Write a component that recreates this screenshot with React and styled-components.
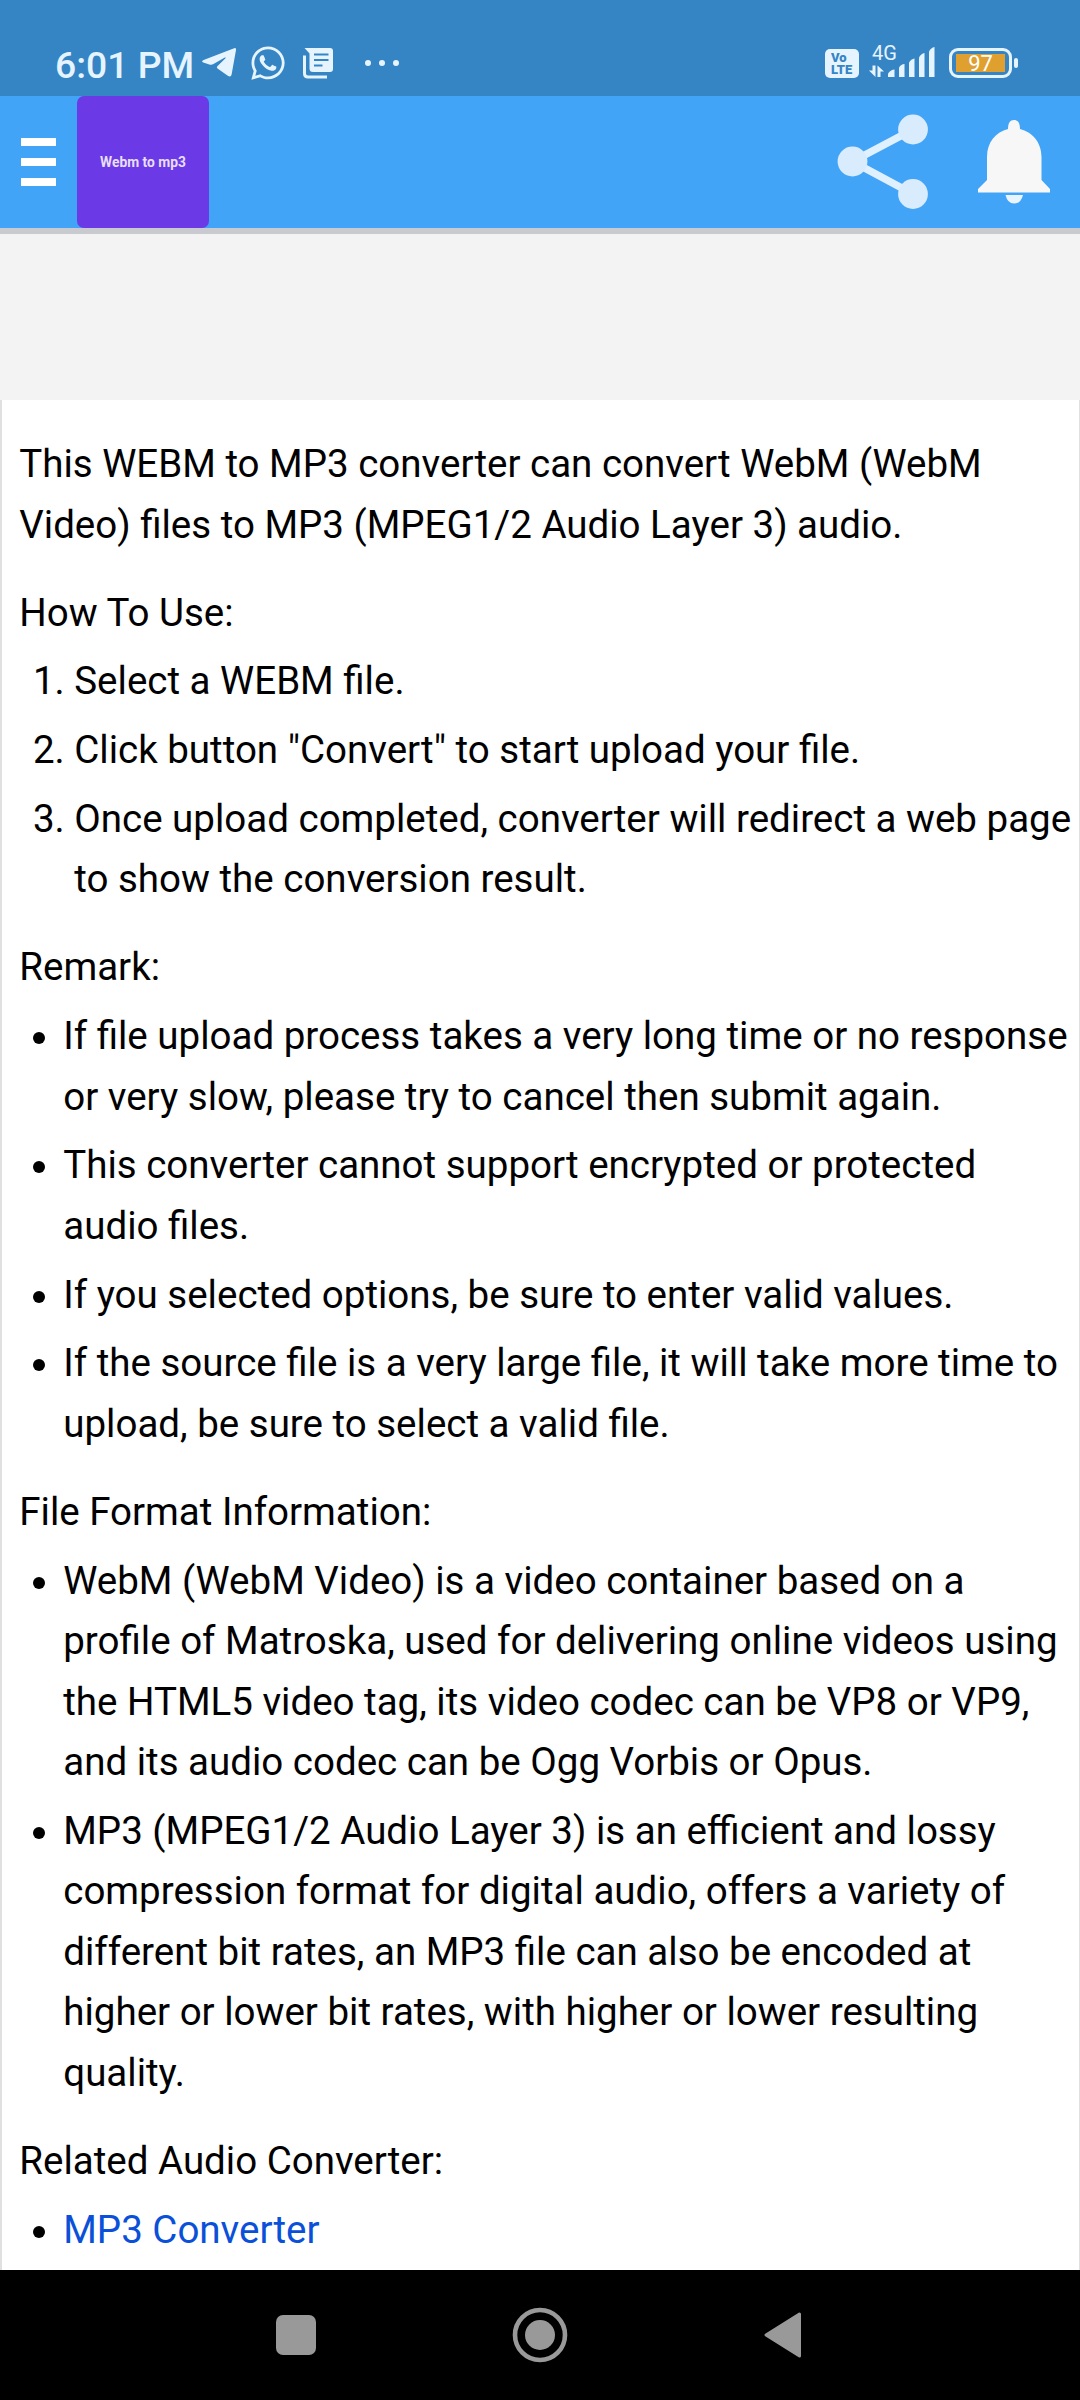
import React from "react";
import styled, { createGlobalStyle } from "styled-components";
import { FaWhatsapp } from "react-icons/fa";

const GlobalStyle = createGlobalStyle`
  * {
    box-sizing: border-box;
  }
  body {
    margin: 0;
    background-color: #000;
    font-family: Roboto, "Noto Sans", sans-serif;
  }
`;

function TelegramIcon() {
  return (
    <svg width="34" height="30" viewBox="0 0 34 30">
      <path
        d="M31.500.5Q34.300-.8 34 2L29.600 26.500Q28.900 29.800 25.800 27.800L15.500 20.500Q14.200 19.400 15.600 18L23.500 10.200Q24.200 9 22.800 9.600L11.500 16Q9.500 17.200 7.300 16.500L1.300 14.500Q-1.200 13.500 1.600 12Z"
        fill="#e6f4ff"
      />
    </svg>
  );
}

function NewsIcon() {
  return (
    <svg width="31" height="31" viewBox="0 0 31 31">
      <path
        d="M1.500 7.500V25.500Q1.500 29 5 29H24"
        fill="none"
        stroke="#e6f4ff"
        strokeWidth="3"
      />
      <path
        d="M1.500 0H27Q30 0 30 3V21Q30 24 27 24H10Q6.500 24 6.500 20.500V5.500Z"
        fill="#e6f4ff"
      />
      <path
        d="M11 6.500H25.500M11 12H25.500M11 17.500H19.500"
        stroke="#3585c5"
        strokeWidth="2.200"
      />
    </svg>
  );
}

function SignalIcon() {
  return (
    <svg width="67" height="32" viewBox="0 0 67 32">
      <g fill="#e6f4ff">
        <path d="M0 23.500H3.500V18.500H6.500V30ZM8.500 30V18.500L15 24.500H11.500V30Z" />
        <path d="M19 30V26.500Q22 22.500 25.500 22.500V30Z" />
        <path d="M30 30V20.500Q32 17 35.500 17V30Z" />
        <path d="M40 30V15.500Q42 12 45.500 11.500V30Z" />
        <path d="M50 30V10.500Q52 6.500 55.500 6V30Z" />
        <path d="M60 30V4.500Q62 .5 65.500 0V30Z" />
      </g>
    </svg>
  );
}

function ShareIcon() {
  return (
    <svg width="92" height="96" viewBox="0 0 92 96">
      <path
        d="M76 15.500L15.500 47.500L76 80"
        fill="none"
        stroke="#dff0fe"
        strokeWidth="7.500"
      />
      <circle cx="76" cy="15.500" r="14.900" fill="#d9ecfd" />
      <circle cx="15.500" cy="47.500" r="14.900" fill="#d9ecfd" />
      <circle cx="76" cy="80" r="14.900" fill="#d9ecfd" />
    </svg>
  );
}

function BellIcon() {
  return (
    <svg width="72" height="84" viewBox="0 0 72 84">
      <path
        d="M36 0C40 0 42 3 42 9C54 12 63.500 22 63.500 37V60L72 69V72.500H0V69L9 60V37C9 22 18 12 30 9C30 3 32 0 36 0Z"
        fill="#f7f7f7"
      />
      <path d="M27.500 75H45Q43 83.500 36 83.500Q29.500 83.500 27.500 75Z" fill="#e9f4fd" />
    </svg>
  );
}

function StatusBar() {
  return (
    <StyledStatusBar>
      <Time>6:01 PM</Time>
      <TelegramIcon />
      <WhatsAppIcon />
      <NewsIcon />
      <Dots>
        <i />
        <i />
        <i />
      </Dots>
      <Volte>
        <span>Vo</span>
        <span>LTE</span>
      </Volte>
      <Network>
        <SignalIcon />
        <span>4G</span>
      </Network>
      <Battery>
        <span>97</span>
      </Battery>
      <BatteryTip />
    </StyledStatusBar>
  );
}

function Header() {
  return (
    <StyledHeader>
      <MenuButton>
        <i />
        <i />
        <i />
      </MenuButton>
      <Logo>Webm to mp3</Logo>
      <HeaderIcons>
        <ShareIcon />
        <BellIcon />
      </HeaderIcons>
    </StyledHeader>
  );
}

const steps = [
  "Select a WEBM file.",
  'Click button "Convert" to start upload your file.',
  "Once upload completed, converter will redirect a web page to show the conversion result.",
];

const remarks = [
  "If file upload process takes a very long time or no response or very slow, please try to cancel then submit again.",
  "This converter cannot support encrypted or protected audio files.",
  "If you selected options, be sure to enter valid values.",
  "If the source file is a very large file, it will take more time to upload, be sure to select a valid file.",
];

const formats = [
  "WebM (WebM Video) is a video container based on a profile of Matroska, used for delivering online videos using the HTML5 video tag, its video codec can be VP8 or VP9, and its audio codec can be Ogg Vorbis or Opus.",
  "MP3 (MPEG1/2 Audio Layer 3) is an efficient and lossy compression format for digital audio, offers a variety of different bit rates, an MP3 file can also be encoded at higher or lower bit rates, with higher or lower resulting quality.",
];

function BulletList({ items }) {
  return (
    <List>
      {items.map((item) => (
        <Item key={item}>
          <Bullet />
          <ItemText>{item}</ItemText>
        </Item>
      ))}
    </List>
  );
}

function App() {
  return (
    <Screen>
      <GlobalStyle />
      <StatusBar />
      <Header />
      <AdSpace />
      <Content>
        <Paragraph>
          This WEBM to MP3 converter can convert WebM (WebM Video) files to MP3
          (MPEG1/2 Audio Layer 3) audio.
        </Paragraph>
        <Paragraph>How To Use:</Paragraph>
        <List>
          {steps.map((step, index) => (
            <Item key={step}>
              <StepNumber>{index + 1}.</StepNumber>
              <ItemText>{step}</ItemText>
            </Item>
          ))}
        </List>
        <Paragraph>Remark:</Paragraph>
        <BulletList items={remarks} />
        <Paragraph>File Format Information:</Paragraph>
        <BulletList items={formats} />
        <Paragraph>Related Audio Converter:</Paragraph>
        <List>
          <Item>
            <Bullet />
            <ItemLink href="#">MP3 Converter</ItemLink>
          </Item>
        </List>
      </Content>
      <NavBar>
        <svg width="42" height="42" viewBox="0 0 42 42">
          <rect x="1" y="1" width="40" height="40" rx="7" fill="#999" />
        </svg>
        <svg width="56" height="56" viewBox="0 0 56 56">
          <circle cx="28" cy="28" r="25" fill="none" stroke="#999" strokeWidth="4.600" />
          <circle cx="28" cy="28" r="15" fill="#999" />
        </svg>
        <svg width="38" height="46" viewBox="0 0 38 46">
          <path
            d="M2 23L35.500 2V44Z"
            fill="#999"
            stroke="#999"
            strokeWidth="3"
            strokeLinejoin="round"
          />
        </svg>
      </NavBar>
    </Screen>
  );
}

export default App;

const Screen = styled.div`
  display: flex;
  flex-direction: column;
  width: 1080px;
  height: 2400px;
  overflow: hidden;
`;

const StyledStatusBar = styled.div`
  display: flex;
  align-items: center;
  flex: none;
  height: 96px;
  padding: 30px 62px 0 55px;
  background-color: #3585c5;
  color: #e6f4ff;
  svg {
    flex: none;
  }
`;

const Time = styled.span`
  width: 138px;
  margin-right: 9px;
  padding-top: 4px;
  font-size: 37.300px;
  font-weight: 500;
  line-height: 44px;
  white-space: nowrap;
`;

const WhatsAppIcon = styled(FaWhatsapp)`
  width: 38px;
  height: 38px;
  margin: 0 16px 0 13px;
`;

const Dots = styled.div`
  display: flex;
  gap: 8px;
  margin-left: 31px;
  margin-right: auto;
  i {
    width: 6px;
    height: 6px;
    border-radius: 50%;
    background-color: #e6f4ff;
  }
`;

const Volte = styled.div`
  display: flex;
  flex-direction: column;
  width: 34px;
  height: 29px;
  padding: 3px 0 0 6px;
  border-radius: 5px;
  background-color: #e6f4ff;
  color: #3585c5;
  font-size: 13px;
  font-weight: 900;
  line-height: 12px;
`;

const Network = styled.div`
  position: relative;
  display: flex;
  margin: 0 13px 0 10px;
  span {
    position: absolute;
    top: -4px;
    left: 3px;
    font-size: 20px;
    line-height: 20px;
  }
`;

const Battery = styled.div`
  display: flex;
  width: 63px;
  height: 30px;
  padding: 3px 4px;
  border: 3px solid #e6f4ff;
  border-radius: 9px;
  span {
    flex: 1;
    background-color: #e0a030;
    color: #fff;
    font-size: 22px;
    line-height: 20px;
    text-align: center;
  }
`;

const BatteryTip = styled.div`
  width: 4px;
  height: 10px;
  margin-left: 2px;
  border-radius: 2px;
  background-color: #e6f4ff;
`;

const StyledHeader = styled.header`
  display: flex;
  align-items: center;
  flex: none;
  height: 138px;
  padding-left: 21px;
  border-bottom: 6px solid #c8cad0;
  background-color: #42a4f6;
`;

const MenuButton = styled.div`
  display: flex;
  flex-direction: column;
  gap: 12px;
  width: 35px;
  margin-right: 21px;
  i {
    height: 7.700px;
    background-color: #fff;
  }
`;

const Logo = styled.div`
  display: flex;
  align-items: center;
  justify-content: center;
  width: 132px;
  height: 132px;
  border-radius: 7px;
  background-color: #6b3ae6;
  color: #e8defb;
  font-size: 13.800px;
  font-weight: 700;
`;

const HeaderIcons = styled.div`
  display: flex;
  align-items: center;
  gap: 49px;
  margin-left: auto;
  margin-right: 30px;
`;

const AdSpace = styled.div`
  flex: none;
  height: 166px;
  background-color: #f3f3f3;
`;

const Content = styled.main`
  flex: 1;
  min-height: 0;
  overflow: hidden;
  padding: 6.600px 6px 0 17.250px;
  border-left: 2px solid #e0e0e0;
  border-right: 1px solid #e0e0e0;
  background-color: #fff;
  color: #000;
  font-size: 38.500px;
  line-height: 60.500px;
`;

const Paragraph = styled.p`
  margin: 27.500px 0 0;
`;

const List = styled.div`
  display: flex;
  flex-direction: column;
`;

const Item = styled.div`
  display: flex;
  margin-top: 8.250px;
`;

const Bullet = styled.span`
  flex: none;
  width: 12px;
  height: 12px;
  margin: 26px 18px 0 14px;
  border-radius: 50%;
  background-color: #000;
`;

const StepNumber = styled.span`
  flex: none;
  width: 55px;
  padding-right: 9.500px;
  text-align: right;
`;

const ItemText = styled.span`
  flex: 1;
`;

const ItemLink = styled.a`
  color: #0b50d8;
  text-decoration: none;
`;

const NavBar = styled.nav`
  display: flex;
  align-items: center;
  flex: none;
  height: 130px;
  padding-left: 274.500px;
  background-color: #000;
  svg:nth-child(2) {
    margin: 0 196px 0 195.500px;
  }
`;
